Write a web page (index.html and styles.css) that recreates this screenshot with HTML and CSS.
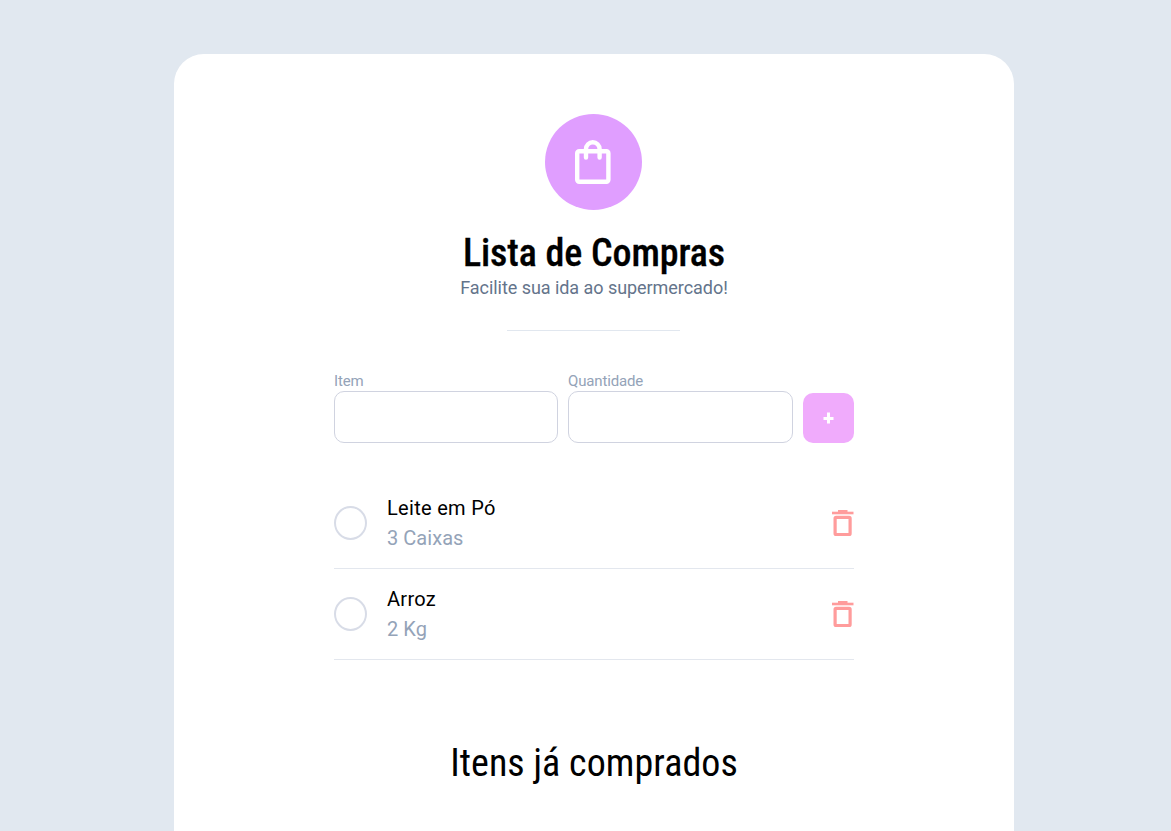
FILE: index.html
```html
<!DOCTYPE html>
<html lang="pt-BR">
<head>
  <meta charset="UTF-8" />
  <meta name="viewport" content="width=device-width, initial-scale=1.0" />
  <title>Lista de Compras</title>
  <link rel="stylesheet" href="styles.css">
</head>
<body>
  <main class="container">
    <header class="header">
      <div class="logo">
        <svg width="36" height="45" viewBox="0 0 36 45" fill="none" stroke="#fff" stroke-width="4.4" stroke-linecap="round" stroke-linejoin="round">
          <rect x="2.2" y="11.2" width="31.2" height="30.6" rx="2" />
          <path d="M11 17.5V9a6.8 6.8 0 0 1 13.6 0v8.5" />
        </svg>
      </div>
      <h1>Lista de Compras</h1>
      <p>Facilite sua ida ao supermercado!</p>
    </header>

    <form class="form">
      <div class="field field-item">
        <label for="item">Item</label>
        <input type="text" id="item" />
      </div>
      <div class="field">
        <label for="quantidade">Quantidade</label>
        <input type="text" id="quantidade" />
      </div>
      <button type="button" class="add" aria-label="Adicionar">
        <svg width="13" height="12" viewBox="0 0 13 12"><path d="M6.5 .5v11M1.5 6.5h10" stroke="#fff" stroke-width="3" /></svg>
      </button>
    </form>

    <ul class="list">
      <li>
        <span class="check"></span>
        <div class="info">
          <strong>Leite em Pó</strong>
          <span>3 Caixas</span>
        </div>
        <svg class="trash" width="22" height="27" viewBox="0 0 22 27" fill="none" stroke="#ff9c9c">
          <path d="M0 3h21.5" stroke-width="2.6" />
          <path d="M6 1.2h9.5" stroke-width="2.4" />
          <rect x="3.1" y="7.3" width="15" height="17.2" rx="1" stroke-width="3.2" />
        </svg>
      </li>
      <li>
        <span class="check"></span>
        <div class="info">
          <strong>Arroz</strong>
          <span>2 Kg</span>
        </div>
        <svg class="trash" width="22" height="27" viewBox="0 0 22 27" fill="none" stroke="#ff9c9c">
          <path d="M0 3h21.5" stroke-width="2.6" />
          <path d="M6 1.2h9.5" stroke-width="2.4" />
          <rect x="3.1" y="7.3" width="15" height="17.2" rx="1" stroke-width="3.2" />
        </svg>
      </li>
    </ul>

    <h2>Itens já comprados</h2>
  </main>
</body>
</html>
```
FILE: styles.css
```css
* {
  margin: 0;
  padding: 0;
  box-sizing: border-box;
}
html, body {
  height: 100%;
}
body {
  padding: 54px 0 0 174px;
  background: #e1e8f0;
  font-family: "Roboto", sans-serif;
  color: #000;
}
.container {
  width: 840px;
  height: 100%;
  padding: 60px 160px 0;
  background: #fff;
  border-radius: 30px 30px 0 0;
}
.header {
  display: flex;
  flex-direction: column;
  align-items: center;
}
.logo {
  display: flex;
  align-items: center;
  justify-content: center;
  width: 97px;
  height: 96px;
  margin-right: 2px;
  padding-right: 1px;
  border-radius: 50%;
  background: #e09eff;
}
h1 {
  margin-top: 20px;
  font-size: 38px;
  line-height: 46px;
  font-weight: 500;
  font-stretch: 75%;
  letter-spacing: -0.05px;
  -webkit-text-stroke: 0.3px #000;
  white-space: nowrap;
}
.header p {
  font-size: 18px;
  line-height: 24px;
  letter-spacing: -0.05px;
  color: #64748b;
  white-space: nowrap;
}
.header::after {
  content: "";
  width: 173px;
  height: 1px;
  margin: 30px 1px 0 0;
  background: #e1e7ef;
}
.form {
  display: flex;
  align-items: flex-end;
  gap: 10px;
  margin-top: 41px;
}
.field {
  width: 225px;
}
.field-item {
  width: 224px;
}
.field label {
  display: block;
  height: 19px;
  font-size: 15px;
  line-height: 18px;
  letter-spacing: -0.15px;
  color: #94a3b8;
}
.field input {
  display: block;
  width: 100%;
  height: 52px;
  padding: 0 12px;
  border: 1px solid #d0d3e0;
  border-radius: 10px;
  background: #fff;
  font: inherit;
}
.add {
  display: flex;
  align-items: center;
  justify-content: center;
  width: 51px;
  height: 50px;
  padding-right: 1px;
  border: none;
  border-radius: 10px;
  background: #f0abfc;
  cursor: pointer;
}
.list {
  margin-top: 35px;
  list-style: none;
}
.list li {
  display: flex;
  align-items: center;
  height: 91px;
  border-bottom: 1px solid #e3e7ee;
}
.check {
  width: 33px;
  height: 34px;
  border: 2px solid #d8dce7;
  border-radius: 50%;
}
.info {
  flex: 1;
  margin-left: 20px;
  font-size: 20px;
  line-height: 30px;
  letter-spacing: 0.3px;
}
.info strong {
  display: block;
  font-weight: 400;
}
.info span {
  display: block;
  color: #94a3b8;
  letter-spacing: 0.05px;
}
h2 {
  margin-top: 80px;
  font-size: 38px;
  line-height: 46px;
  font-weight: 400;
  font-stretch: 75%;
  letter-spacing: 0.05px;
  text-align: center;
}
```
